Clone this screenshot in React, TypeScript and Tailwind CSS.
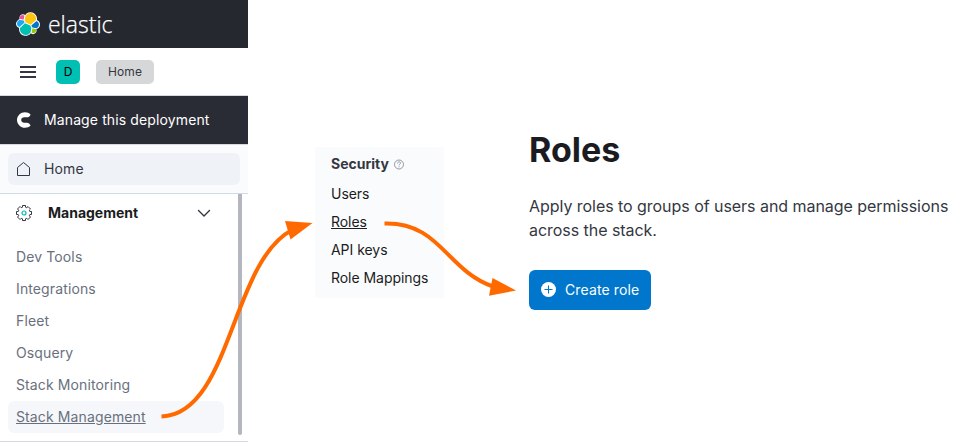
const navItems = ['Dev Tools', 'Integrations', 'Fleet', 'Osquery', 'Stack Monitoring'];
const securityLinks = ['Users', 'Roles', 'API keys', 'Role Mappings'];

function ElasticLogo() {
  return (
    <svg className="h-6 w-6" viewBox="0 0 32 32">
      <path fill="#FFF" d="M32 16.77a6.334 6.334 0 00-1.14-3.641 6.298 6.298 0 00-3.02-2.32 8.872 8.872 0 00.17-1.71 8.717 8.717 0 00-1.667-5.155 8.666 8.666 0 00-4.381-3.176 8.64 8.64 0 00-5.406.013 8.668 8.668 0 00-4.366 3.197 4.714 4.714 0 00-2.868-.993 4.723 4.723 0 00-3.343 1.379 4.763 4.763 0 00-1.382 3.354 4.9 4.9 0 00.29 1.65 6.356 6.356 0 00-3.055 2.332A6.338 6.338 0 000 15.36a6.348 6.348 0 004.18 5.99 8.855 8.855 0 00-.16 1.71 8.676 8.676 0 001.663 5.134 8.626 8.626 0 004.363 3.168 8.6 8.6 0 005.385-.005 8.627 8.627 0 004.356-3.177 4.69 4.69 0 006.55-.595 4.75 4.75 0 00.761-4.78A6.36 6.36 0 0032 16.77" />
      <path fill="#FEC514" d="M12.58 13.787l7.002 3.211 7.066-6.213a7.849 7.849 0 00.152-1.557c0-4.287-3.464-7.774-7.722-7.774a7.71 7.71 0 00-6.37 3.378l-1.176 6.115 1.048 2.84z" />
      <path fill="#00BFB3" d="M5.333 21.215A7.976 7.976 0 005.18 22.8c0 4.3 3.484 7.8 7.767 7.8a7.75 7.75 0 006.405-3.398l1.166-6.094-1.556-2.984-7.03-3.211-6.6 6.302z" />
      <path fill="#F04E98" d="M5.288 9.067l4.8 1.137L11.14 4.73a3.785 3.785 0 00-5.852 4.337z" />
      <path fill="#1BA9F5" d="M4.872 10.214a5.294 5.294 0 00-3.595 5.026c0 2.212 1.36 4.127 3.44 4.92l6.734-6.097-1.236-2.646-5.343-1.203z" />
      <path fill="#93C90E" d="M20.873 27.2a3.76 3.76 0 005.88-4.34l-4.8-1.13-1.08 5.47z" />
      <path fill="#07C" d="M21.848 20.563l5.28 1.238a5.304 5.304 0 003.6-5.026 5.28 5.28 0 00-3.395-4.933l-6.906 6.063 1.421 2.658z" />
    </svg>
  );
}

function CloudIcon() {
  return (
    <svg className="h-4 w-4" viewBox="0 0 16 16" fill="#fff">
      <path d="M14.600 2.400C13.200.9 11.200.2 9 .2 4.700.2 1 3.700 1 8s3.700 7.800 8 7.800c2.200 0 4.200-.7 5.600-2.200-.7-1.900-2-2.900-3.900-2.900H8.300C6.500 10.700 5.200 9.600 5.200 8s1.300-2.700 3.100-2.700h2.400c1.900 0 3.300-1 3.900-2.900z" />
    </svg>
  );
}

function HomeIcon() {
  return (
    <svg className="h-4 w-4" viewBox="0 0 16 16" fill="none" stroke="#343741" strokeLinejoin="round">
      <path d="M1.500 6.500 7.500 1.500l6 5v8h-12z" />
    </svg>
  );
}

function GearIcon() {
  return (
    <svg className="h-4 w-4" viewBox="0 0 16 16" fill="none">
      <path
        stroke="#343741"
        strokeLinejoin="round"
        d="M6.500.5h3v1.700l1.300.5L12 1.500 14.500 4l-1.200 1.200.5 1.300h1.700v3h-1.700l-.5 1.300 1.200 1.200-2.500 2.500-1.200-1.200-1.300.5v1.700h-3v-1.700l-1.300-.5L4 14.500 1.500 12l1.200-1.200-.5-1.300H.5v-3h1.700l.5-1.300L1.500 4 4 1.500l1.200 1.200 1.300-.5z"
      />
      <circle cx="8" cy="8" r="2" stroke="#00BFB3" strokeWidth="1.200" />
    </svg>
  );
}

function Sidebar() {
  return (
    <aside className="flex h-[442px] w-[248px] shrink-0 flex-col">
      <header className="flex h-12 shrink-0 items-center bg-[#25282f] pl-4">
        <ElasticLogo />
        <svg className="ml-2 h-8 w-[70px]" viewBox="0 0 70 32">
          <text x="0" y="24.500" textLength="64.500" lengthAdjust="spacingAndGlyphs" fill="#fff" stroke="#fff" strokeWidth=".25" fontSize="24" className="font-['Open_Sans',sans-serif] font-light">
            elastic
          </text>
        </svg>
      </header>
      <div className="flex h-12 shrink-0 items-center border-b border-[#d3dae6] pl-5">
        <div className="flex w-4 flex-col gap-[3px]">
          <span className="h-0.5 bg-[#343741]" />
          <span className="h-0.5 bg-[#343741]" />
          <span className="h-0.5 bg-[#343741]" />
        </div>
        <span className="ml-5 flex h-6 w-6 items-center justify-center rounded-[5px] bg-[#00bfb3] text-xs text-black">D</span>
        <span className="ml-4 flex h-6 w-[58px] items-center justify-center rounded-[5px] bg-[#d6d7d9] text-xs tracking-[0.1px] text-[#343741]">Home</span>
      </div>
      <div className="flex h-[49px] shrink-0 items-center border-b border-[#d3dae6] bg-[#2a2c35] pl-4 text-sm tracking-[0.12px] text-white">
        <CloudIcon />
        <span className="ml-3">Manage this deployment</span>
      </div>
      <div className="h-[49px] shrink-0 border-b border-[#d3dae6] bg-[#fafbfd] px-2 pt-2">
        <div className="flex h-8 items-center rounded-md bg-[#eff2f7] pl-2 text-sm tracking-[0.12px] text-[#343741]">
          <HomeIcon />
          <span className="ml-3">Home</span>
        </div>
      </div>
      <div className="flex min-h-0 flex-1 border-b border-[#d3dae6]">
        <nav className="flex w-[238px] flex-col text-sm tracking-[0.12px] text-[#69707d]">
          <div className="flex h-[38px] items-center pl-4 tracking-normal text-[#1a1c21]">
            <GearIcon />
            <span className="ml-4 w-[149px] font-bold">Management</span>
            <svg className="h-4 w-4" viewBox="0 0 16 16" fill="none" stroke="#343741" strokeWidth="1.400" strokeLinecap="round" strokeLinejoin="round">
              <path d="M1.500 5.500 7 11l5.500-5.500" />
            </svg>
          </div>
          <div className="flex flex-col pt-[9px]">
            {navItems.map((item) => (
              <span key={item} className="flex h-8 items-center pl-4">{item}</span>
            ))}
            <span className="ml-2 flex h-8 w-[216px] items-center rounded-md bg-[#f5f7fa] pl-2 underline">Stack Management</span>
          </div>
        </nav>
        <div className="h-[241px] w-1 rounded-b-sm bg-[#b3b6be]" />
      </div>
    </aside>
  );
}

function SecurityPanel() {
  return (
    <section className="ml-[67px] mt-[147px] h-[151px] w-[129px] shrink-0 bg-[#fafbfd] pl-4 pt-[5px] text-sm text-[#343741]">
      <div className="flex h-6 items-center font-bold">
        Security
        <svg className="ml-[5px] h-[11px] w-[11px]" viewBox="0 0 11 11" fill="none" stroke="#7b808b" strokeWidth=".8">
          <circle cx="5" cy="5.500" r="4.500" />
          <path d="M3.500 4.400c0-2 3-2 3-.2 0 1-1.500 1.100-1.500 2.200M5 7.300v1" />
        </svg>
      </div>
      <div className="flex flex-col pt-1 tracking-[-0.04px] text-[#1a1c21]">
        {securityLinks.map((link) => (
          <a key={link} className={link === 'Roles' ? 'flex h-7 items-center underline' : 'flex h-7 items-center'}>{link}</a>
        ))}
      </div>
    </section>
  );
}

function RolesIntro() {
  return (
    <main className="ml-[85px] mt-[130px] w-[431px] text-[#343741]">
      <h1 className="text-[34px] leading-10 font-bold text-[#1a1c21]">Roles</h1>
      <p className="mt-6 text-base leading-6 tracking-[-0.045px]">
        Apply roles to groups of users and manage permissions
        <br />
        across the stack.
      </p>
      <button className="mt-7 flex h-10 w-[122px] items-center rounded-md bg-[#07c] pl-3 text-sm tracking-[0.12px] text-white">
        <svg className="h-4 w-4" viewBox="0 0 16 16">
          <circle cx="7.500" cy="7.500" r="7.500" fill="#fff" />
          <path d="M7.500 3.500v8M3.500 7.500h8" stroke="#07c" />
        </svg>
        <span className="ml-2">Create role</span>
      </button>
    </main>
  );
}

function FlowArrows() {
  return (
    <svg className="pointer-events-none absolute inset-0 h-[445px] w-[960px]" viewBox="0 0 960 445" fill="none" stroke="#ff6a00" strokeWidth="4">
      <path d="M161.500 416.500C231 414 231 262 292 230" />
      <path d="M285 221l27.500 2L290.500 239.500z" fill="#ff6a00" stroke="none" />
      <path d="M384.500 223.500C440 222 446 270 493 286.500" />
      <path d="M492.500 278 516 290.500 489 295.800z" fill="#ff6a00" stroke="none" />
    </svg>
  );
}

export default function App() {
  return (
    <div className="relative flex h-[445px] w-[960px] overflow-hidden bg-white font-['Inter',sans-serif]">
      <Sidebar />
      <SecurityPanel />
      <RolesIntro />
      <FlowArrows />
    </div>
  );
}
